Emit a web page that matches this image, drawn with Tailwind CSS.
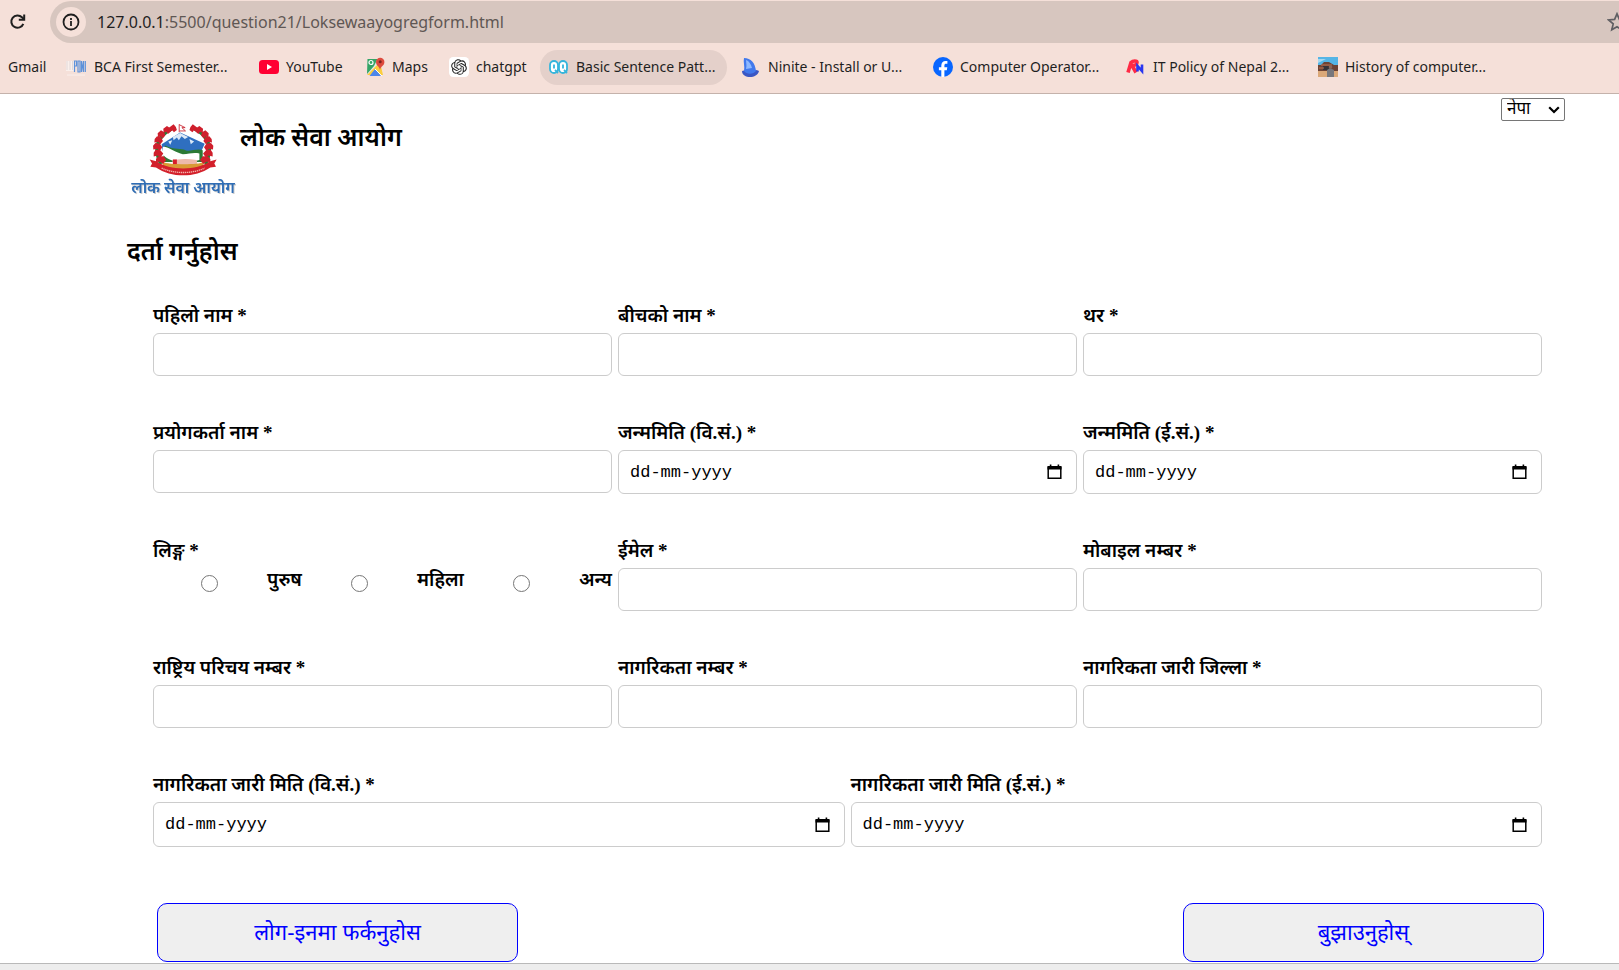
<!DOCTYPE html>
<html lang="hi">
<head>
<meta charset="utf-8">
<meta name="viewport" content="width=device-width, initial-scale=1">
<title>लोक सेवा आयोग</title>
<script src="https://cdn.jsdelivr.net/npm/@tailwindcss/browser@4"></script>
</head>
<body class="flex min-h-screen flex-col overflow-x-hidden bg-white font-['Liberation_Serif','Noto_Sans_Devanagari','Noto_Sans',sans-serif] text-black">

<!-- Browser toolbar -->
<header class="border-b border-[#c4b2ab] bg-[#f5e0d9] pt-px font-['Noto_Sans','Open_Sans',sans-serif] text-[#1f1f1f]">
  <div class="flex h-[42px] items-center">
    <button type="button" aria-label="Reload" class="ml-2 flex size-5 shrink-0 items-center justify-center">
      <svg class="size-5" viewBox="0 0 20 20" fill="none" stroke="#1f1f1f" stroke-width="2"><path d="M15.300 11.800A6.200 6.200 0 1 1 14 5.300L16 7.200"/><path d="M16.200 2.500V7.800H10.800"/></svg>
    </button>
    <div class="ml-[22px] flex h-full flex-1 items-center overflow-hidden rounded-l-full bg-[#d7c6bf] pl-1.5">
      <span class="flex size-[30px] shrink-0 items-center justify-center rounded-full bg-[#f5e0d9]">
        <svg class="size-[18px]" viewBox="0 0 18 18" fill="none" stroke="#1f1f1f" stroke-width="1.8"><circle cx="9" cy="9" r="7.5"/><path d="M9 8v5M9 5v1.9"/></svg>
      </span>
      <span class="ml-[11px] flex-1 whitespace-nowrap text-base text-[#5f5754]"><span class="text-[#1f1f1f]">127.0.0.1</span>:5500/question21/Loksewaayogregform.html</span>
      <button type="button" aria-label="Bookmark" class="-mr-2 size-5 shrink-0">
        <svg class="size-5" viewBox="0 0 20 20" fill="none" stroke="#5f5f63" stroke-width="1.7"><path d="M10 1.8l2.4 5.6 6 .5-4.600 4 1.400 5.900L10 14.700l-5.200 3.100 1.400-5.900-4.600-4 6-.5z"/></svg>
      </button>
    </div>
  </div>
  <nav class="flex h-[50px] items-center pb-0.5 text-sm whitespace-nowrap">
    <a href="#" class="w-[66px] shrink-0 pl-2">Gmail</a>
    <a href="#" class="flex w-[193px] shrink-0 items-center gap-2">
      <svg class="h-5 w-5" viewBox="0 0 20 20"><path d="M0 4h8v10H0z" fill="#fff" opacity=".5"/><path d="M1 4v9M4 4v9M6.500 4v9" stroke="#e2d8d8" stroke-width="1"/><path d="M8.500 15V4h2v5h-2M12 4h2v11h-2zM15.500 15V4l2 11V4M19.300 4v11" fill="none" stroke="#5e92da" stroke-width="1.200"/><path d="M1 18h18" stroke="#fff" opacity=".5"/></svg>
      BCA First Semester...</a>
    <a href="#" class="flex w-[107px] shrink-0 items-center gap-[7px]">
      <svg class="h-5 w-5" viewBox="0 0 20 20"><rect y="3" width="20" height="14" rx="3.500" fill="#ff0033"/><path d="M8 7v6l5-3z" fill="#fff"/></svg>
      YouTube</a>
    <a href="#" class="flex w-[83px] shrink-0 items-center gap-[7px]">
      <svg class="h-5 w-[19px]" viewBox="0 0 19 20"><path d="M1.500 2H15v16H1.500z" fill="#e8e8e8"/><path d="M1.500 2h10L8 9l-7 8z" fill="#34a466"/><path d="M1 18L14 5l3 13z" fill="#fbce3f"/><path d="M3.500 19l5.500-7 6 7z" fill="#4c86ec"/><path d="M9 12l7 7" stroke="#fff"/><circle cx="5" cy="5.500" r="2" fill="none" stroke="#fff" stroke-width="1.200"/><path d="M14 13c-.5-4-4-4-4-8a4.200 4.200 0 0 1 8.400 0c0 4-3.900 4-4.400 8z" fill="#dd4b3e"/><circle cx="14.200" cy="4.800" r="1.500" fill="#7b231f"/></svg>
      Maps</a>
    <a href="#" class="flex w-[91px] shrink-0 items-center gap-[7px]">
      <svg class="h-5 w-5" viewBox="0 0 24 24"><rect width="24" height="24" rx="5" fill="#fff"/><g transform="translate(2.600 2.600) scale(.785)"><path fill="#222" d="M22.282 9.821a5.985 5.985 0 0 0-.516-4.910 6.046 6.046 0 0 0-6.510-2.900A6.065 6.065 0 0 0 4.981 4.182a5.985 5.985 0 0 0-3.998 2.900 6.046 6.046 0 0 0 .743 7.097 5.980 5.980 0 0 0 .511 4.911 6.051 6.051 0 0 0 6.515 2.900A5.985 5.985 0 0 0 13.260 24a6.056 6.056 0 0 0 5.772-4.206 5.990 5.990 0 0 0 3.998-2.900 6.056 6.056 0 0 0-.748-7.073zM13.260 22.430a4.476 4.476 0 0 1-2.876-1.041l.141-.080 4.779-2.758a.795.795 0 0 0 .393-.681v-6.737l2.020 1.169a.071.071 0 0 1 .038.052v5.583a4.504 4.504 0 0 1-4.495 4.493zM3.600 18.304a4.471 4.471 0 0 1-.535-3.014l.142.085 4.783 2.759a.771.771 0 0 0 .781 0l5.843-3.369v2.332a.080.080 0 0 1-.033.062L9.740 19.950a4.500 4.500 0 0 1-6.140-1.646zM2.341 7.896a4.485 4.485 0 0 1 2.365-1.973V11.600a.766.766 0 0 0 .388.677l5.815 3.354-2.020 1.169a.076.076 0 0 1-.071 0l-4.831-2.787A4.504 4.504 0 0 1 2.341 7.872zm16.597 3.855l-5.833-3.387L15.119 7.200a.076.076 0 0 1 .071 0l4.831 2.791a4.494 4.494 0 0 1-.677 8.105v-5.678a.790.790 0 0 0-.407-.667zm2.010-3.023l-.142-.085-4.774-2.782a.776.776 0 0 0-.785 0L9.409 9.230V6.897a.066.066 0 0 1 .028-.061l4.831-2.787a4.499 4.499 0 0 1 6.680 4.660zM8.307 12.863l-2.020-1.164a.080.080 0 0 1-.038-.057V6.074a4.499 4.499 0 0 1 7.376-3.454l-.142.081-4.778 2.758a.795.795 0 0 0-.393.681zm1.097-2.365l2.602-1.500 2.607 1.500v2.999l-2.597 1.500-2.607-1.500z"/></g></svg>
      chatgpt</a>
    <a href="#" class="flex h-[35px] w-[187px] shrink-0 items-center gap-2 rounded-full bg-[#e4d0ca] pl-[9px]">
      <svg class="h-5 w-[19px]" viewBox="0 0 19 20"><rect x="1" y="4" width="8" height="12" rx="4" fill="#fff" stroke="#35b5dc" stroke-width="1.800"/><rect x="10" y="4" width="8" height="12" rx="4" fill="#fff" stroke="#35b5dc" stroke-width="1.800"/><path d="M5 7.500v4M14 7.500v4M6 13l3 3M15 13l3 3" stroke="#35b5dc" stroke-width="1.800"/></svg>
      Basic Sentence Patt...</a>
    <a href="#" class="flex w-[206px] shrink-0 items-center gap-2 pl-[14px]">
      <svg class="h-5 w-[19px]" viewBox="0 0 19 20"><path d="M1 14c4-1 12-2 17 0-1 4-5 6-9 6s-8-2-8-6z" fill="#3a57c4"/><path d="M3 14C4 9 2 5 3 1c7 0 11 5 12 13-2 3-9 4-12 0z" fill="#4179ec"/><path d="M5 12c1-4 0-6 0-9 3 1 5 4 6 8z" fill="#8db8ff"/></svg>
      Ninite - Install or U...</a>
    <a href="#" class="flex w-[193px] shrink-0 items-center gap-[7px]">
      <svg class="h-5 w-5" viewBox="0 0 20 20"><circle cx="10" cy="10" r="10" fill="#0866ff"/><path d="M8.300 20v-6.800H5.900v-3h2.400V8.700c0-3.300 1.600-4.800 4.300-4.800.8 0 1.300.1 1.800.2v2.700h-1.300c-1.200 0-1.700.6-1.700 1.900v1.500h2.900l-.5 3h-2.400v6.800z" fill="#fff"/></svg>
      Computer Operator...</a>
    <a href="#" class="flex w-[192px] shrink-0 items-center gap-2">
      <svg class="h-5 w-[19px]" viewBox="0 0 19 20" fill="none"><path d="M2 15.500L5 5.500c2-2 6-2 6 0s-2 3-5 3l4 7" stroke="#ff2a45" stroke-width="3.600"/><path d="M11.500 14.500V9l4.500 5V7.500" stroke="#2936f0" stroke-width="2.600"/></svg>
      IT Policy of Nepal 2...</a>
    <a href="#" class="flex shrink-0 items-center gap-[7px]">
      <svg class="h-5 w-5" viewBox="0 0 20 20"><path d="M0 0h20v20H0z" fill="#55b5e6"/><path d="M0 2h8l-8 4z" fill="#a6d8ef"/><path d="M0 13h20v7H0z" fill="#dba878"/><path d="M0 8h3l3-3h5l5 3h4v6H0z" fill="#6d4335"/><path d="M5 9h8v4H5z" fill="#343238"/><path d="M3 8h11M1 11h5" stroke="#bd7454"/><path d="M9 20v-7l3-2 4 2v7z" fill="#77777c"/><circle cx="12.500" cy="10" r="1.800" fill="#8b6758"/></svg>
      History of computer...</a>
  </nav>
</header>

<div class="flex justify-end pt-1 pr-[54px]">
  <div class="relative">
    <select aria-label="भाषा" class="block h-[23px] w-16 appearance-none rounded-[2px] border border-[#767676] bg-white pb-0.5 pl-[5px] text-[17px] leading-5">
      <option>नेपा</option>
    </select>
    <svg class="pointer-events-none absolute top-2 right-[5px] h-2 w-3" viewBox="0 0 12 8" fill="none" stroke="#000" stroke-width="2.200"><path d="M1.200 1.200L6 6l4.800-4.800"/></svg>
  </div>
</div>

<main class="flex flex-1 flex-col pr-[75px] pl-[127px]">
  <div class="flex h-[76px] gap-[5px] pl-1">
    <div class="flex w-[104px] flex-col items-center pt-0.5">
      <svg class="h-[53px] w-[69px] shrink-0" viewBox="118 68 208 160" role="img" aria-label="लोक सेवा आयोग">
        <ellipse cx="221" cy="150" rx="66" ry="60" fill="#fff"/>
        <path d="M156 132l56-35 74 34-10 22H160z" fill="#2f6fc0"/>
        <path d="M190 110l22-12 24 12-10 6-10-8-8 12-6-8-10 8zM240 116l14 8-10 8zM176 124l12-4-6 14z" fill="#dceaf8"/>
        <path d="M166 136c30 14 50 8 62 14s34-6 52 0v36H160z" fill="#2b7a35"/>
        <path d="M160 140c20 0 40 20 60 22 20 0 30-6 50-2v20c-50 14-90 6-110-16z" fill="#fff"/>
        <path d="M188 182c16-6 46-8 74-2l2 16-70 4z" fill="#edb9ab"/>
        <path d="M160 186c14 8 106 10 122 0v24l-60 12-62-12z" fill="#d99a35"/>
        <path d="M190 178h12v14h-12z" fill="#d91f2b"/>
        <g stroke="#2f7a35" stroke-width="11" fill="none"><path d="M186 86c-46 22-54 64-32 106M256 86c46 22 54 64 32 106"/></g>
        <g fill="#cf1f2c">
          <path d="M192 72l7 8 3 9-9 7-4-5-8 3-3-12z"/>
          <path d="M172 77l8 5 4 12-9 7-4-6-9 2-1-12z"/>
          <path d="M154 90l10 6 3 10-8 9-5-6-9 2-1-12z"/>
          <path d="M142 108l12 3 6 11-8 10-6-7-12 2 1-11z"/>
          <path d="M137 128l14 3 7 10-8 12-7-7-12 2-1-11z"/>
          <path d="M138 149l14 1 9 10-8 12-9-6-12 3 0-11z"/>
          <path d="M146 169l16-1 8 12-10 12-9-7-12 1 0-9z"/>
          <path d="M250 72l-7 8-3 9 9 7 4-5 8 3 3-12z"/>
          <path d="M270 77l-8 5-4 12 9 7 4-6 9 2 1-12z"/>
          <path d="M288 90l-10 6-3 10 8 9 5-6 9 2 1-12z"/>
          <path d="M300 108l-12 3-6 11 8 10 6-7 12 2-1-11z"/>
          <path d="M305 128l-14 3-7 10 8 12 7-7 12 2 1-11z"/>
          <path d="M304 149l-14 1-9 10 8 12 9-6 12 3 0-11z"/>
          <path d="M296 169l-16-1-8 12 10 12 9-7 12 1 0-9z"/>
        </g>
        <path d="M120 178l22 6c38 28 120 28 158 0l22-6-7 12 5 10-17 2c-46 32-118 32-164 0l-17-2 5-10z" fill="#d3202b"/>
        <path d="M156 204c38 18 92 18 130 0" fill="none" stroke="#f2b3ac" stroke-width="4" stroke-dasharray="4 2"/>
        <path d="M209 72v24M209 73l18 9h-10l11 10h-18" fill="#fff" stroke="#c8202c" stroke-width="2.500"/>
      </svg>
      <p class="text-base leading-6 font-semibold whitespace-nowrap text-[#2f6db5] drop-shadow-[1px_1px_0_#cccccc]">लोक सेवा आयोग</p>
    </div>
    <h1 class="text-[25px] leading-[34px] font-semibold">लोक सेवा आयोग</h1>
  </div>

  <h2 class="mt-[38px] text-[25px] leading-[34px] font-semibold">दर्ता गर्नुहोस</h2>

  <form class="mt-9 flex flex-col pl-[26px]">
    <div class="mr-0.5 grid grid-cols-6 gap-x-1.5 gap-y-[46px] text-[19px] font-semibold">
      <div class="col-span-2">
        <label for="first" class="block h-7 leading-[22px]">पहिलो नाम *</label>
        <input id="first" type="text" class="block h-[43px] w-full rounded-md border border-[#ccc] px-3">
      </div>
      <div class="col-span-2">
        <label for="middle" class="block h-7 leading-[22px]">बीचको नाम *</label>
        <input id="middle" type="text" class="block h-[43px] w-full rounded-md border border-[#ccc] px-3">
      </div>
      <div class="col-span-2">
        <label for="last" class="block h-7 leading-[22px]">थर *</label>
        <input id="last" type="text" class="block h-[43px] w-full rounded-md border border-[#ccc] px-3">
      </div>

      <div class="col-span-2">
        <label for="user" class="block h-7 leading-[22px]">प्रयोगकर्ता नाम *</label>
        <input id="user" type="text" class="block h-[43px] w-full rounded-md border border-[#ccc] px-3">
      </div>
      <div class="col-span-2">
        <label for="dobbs" class="block h-7 leading-[22px]">जन्ममिति (वि.सं.) *</label>
        <div class="flex h-11 items-center rounded-md border border-[#ccc] pr-[14px] pl-[11px]">
          <input id="dobbs" type="text" placeholder="dd-mm-yyyy" class="min-w-0 flex-1 pt-0.5 font-['Liberation_Mono',monospace] text-[17px] font-normal placeholder:text-black">
          <button type="button" aria-label="पात्रो"><svg class="h-4 w-[15px]" viewBox="0 0 15 16"><path d="M1.200 3.500h12.600v10.700H1.200z" fill="none" stroke="#000" stroke-width="1.500"/><path d="M.5 2h14v3.500H.5zM2.800 0.500h1.600V3H2.800zM10.600 0.500h1.600V3h-1.600z"/></svg></button>
        </div>
      </div>
      <div class="col-span-2">
        <label for="dobad" class="block h-7 leading-[22px]">जन्ममिति (ई.सं.) *</label>
        <div class="flex h-11 items-center rounded-md border border-[#ccc] pr-[14px] pl-[11px]">
          <input id="dobad" type="text" placeholder="dd-mm-yyyy" class="min-w-0 flex-1 pt-0.5 font-['Liberation_Mono',monospace] text-[17px] font-normal placeholder:text-black">
          <button type="button" aria-label="पात्रो"><svg class="h-4 w-[15px]" viewBox="0 0 15 16"><path d="M1.200 3.500h12.600v10.700H1.200z" fill="none" stroke="#000" stroke-width="1.500"/><path d="M.5 2h14v3.500H.5zM2.800 0.500h1.600V3H2.800zM10.600 0.500h1.600V3h-1.600z"/></svg></button>
        </div>
      </div>

      <fieldset class="col-span-2">
        <legend class="block h-7 leading-[22px]">लिङ्ग *</legend>
        <div class="flex items-start justify-between pl-12 leading-6">
          <input id="male" name="gender" type="radio" class="mt-[7px] size-[17px] appearance-none rounded-full border border-[#767676] bg-white checked:border-[5px]">
          <label for="male">पुरुष</label>
          <input id="female" name="gender" type="radio" class="mt-[7px] size-[17px] appearance-none rounded-full border border-[#767676] bg-white checked:border-[5px]">
          <label for="female">महिला</label>
          <input id="other" name="gender" type="radio" class="mt-[7px] size-[17px] appearance-none rounded-full border border-[#767676] bg-white checked:border-[5px]">
          <label for="other">अन्य</label>
        </div>
      </fieldset>
      <div class="col-span-2">
        <label for="email" class="block h-7 leading-[22px]">ईमेल *</label>
        <input id="email" type="email" class="block h-[43px] w-full rounded-md border border-[#ccc] px-3">
      </div>
      <div class="col-span-2">
        <label for="mobile" class="block h-7 leading-[22px]">मोबाइल नम्बर *</label>
        <input id="mobile" type="tel" class="block h-[43px] w-full rounded-md border border-[#ccc] px-3">
      </div>

      <div class="col-span-2">
        <label for="nid" class="block h-7 leading-[22px]">राष्ट्रिय परिचय नम्बर *</label>
        <input id="nid" type="text" class="block h-[43px] w-full rounded-md border border-[#ccc] px-3">
      </div>
      <div class="col-span-2">
        <label for="citno" class="block h-7 leading-[22px]">नागरिकता नम्बर *</label>
        <input id="citno" type="text" class="block h-[43px] w-full rounded-md border border-[#ccc] px-3">
      </div>
      <div class="col-span-2">
        <label for="citdist" class="block h-7 leading-[22px]">नागरिकता जारी जिल्ला *</label>
        <input id="citdist" type="text" class="block h-[43px] w-full rounded-md border border-[#ccc] px-3">
      </div>

      <div class="col-span-3">
        <label for="issuebs" class="block h-7 leading-[22px]">नागरिकता जारी मिति (वि.सं.) *</label>
        <div class="flex h-[45px] items-center rounded-md border border-[#ccc] pr-[14px] pl-[11px]">
          <input id="issuebs" type="text" placeholder="dd-mm-yyyy" class="min-w-0 flex-1 font-['Liberation_Mono',monospace] text-[17px] font-normal placeholder:text-black">
          <button type="button" aria-label="पात्रो"><svg class="h-4 w-[15px]" viewBox="0 0 15 16"><path d="M1.200 3.500h12.600v10.700H1.200z" fill="none" stroke="#000" stroke-width="1.500"/><path d="M.5 2h14v3.500H.5zM2.800 0.500h1.600V3H2.800zM10.600 0.500h1.600V3h-1.600z"/></svg></button>
        </div>
      </div>
      <div class="col-span-3">
        <label for="issuead" class="block h-7 leading-[22px]">नागरिकता जारी मिति (ई.सं.) *</label>
        <div class="flex h-[45px] items-center rounded-md border border-[#ccc] pr-[14px] pl-[11px]">
          <input id="issuead" type="text" placeholder="dd-mm-yyyy" class="min-w-0 flex-1 font-['Liberation_Mono',monospace] text-[17px] font-normal placeholder:text-black">
          <button type="button" aria-label="पात्रो"><svg class="h-4 w-[15px]" viewBox="0 0 15 16"><path d="M1.200 3.500h12.600v10.700H1.200z" fill="none" stroke="#000" stroke-width="1.500"/><path d="M.5 2h14v3.500H.5zM2.800 0.500h1.600V3H2.800zM10.600 0.500h1.600V3h-1.600z"/></svg></button>
        </div>
      </div>
    </div>

    <div class="mt-14 flex justify-between pl-1 font-['Liberation_Sans','Noto_Sans_Devanagari','Noto_Sans',sans-serif] text-[22px] text-[#0000ff]">
      <button type="button" class="h-[59px] w-[361px] rounded-[10px] border border-[#0000ff] bg-[#efefef]">लोग-इनमा फर्कनुहोस</button>
      <button type="submit" class="h-[59px] w-[361px] rounded-[10px] border border-[#0000ff] bg-[#efefef]">बुझाउनुहोस्</button>
    </div>
  </form>
</main>

<footer class="h-[7px] border-t border-[#b9b9b9] bg-[#ededed]"></footer>
</body>
</html>
